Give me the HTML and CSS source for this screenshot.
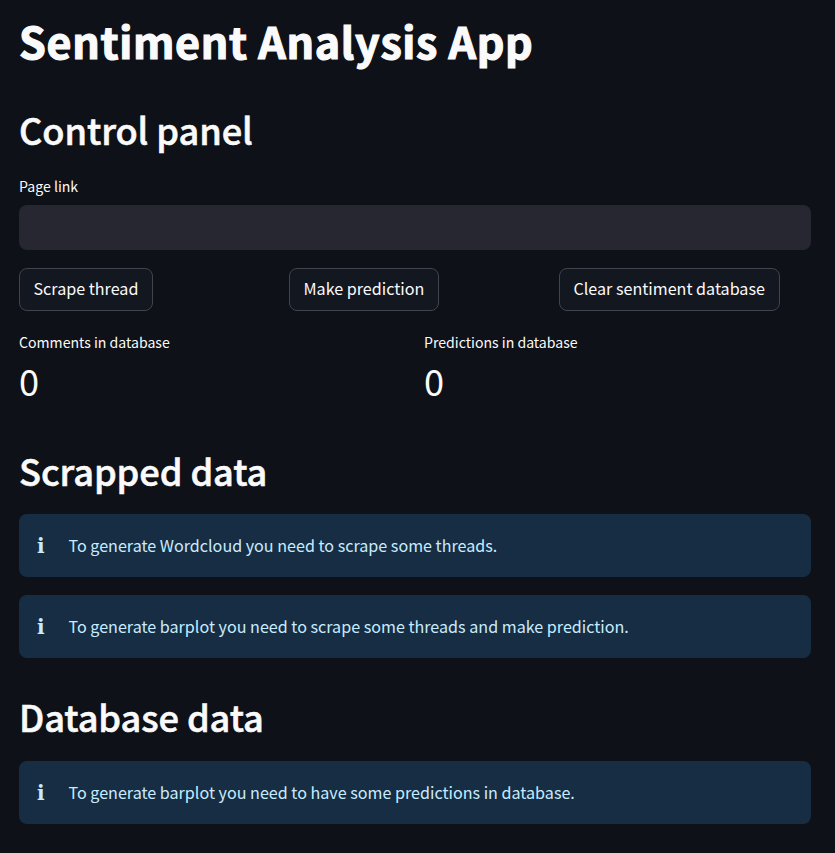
FILE: index.html
```html
<!DOCTYPE html>
<html lang="en">
<head>
<meta charset="utf-8">
<title>Sentiment Analysis App</title>
<link rel="stylesheet" href="styles.css">
</head>
<body>
<main class="app">
  <h1 class="title">Sentiment Analysis App</h1>
  <section class="panel">
    <h2 class="heading">Control panel</h2>
    <label class="label" for="link">Page link</label>
    <input class="input" id="link" type="text">
    <div class="actions">
      <div><button class="button">Scrape thread</button></div>
      <div><button class="button">Make prediction</button></div>
      <div><button class="button">Clear sentiment database</button></div>
    </div>
    <div class="metrics">
      <div><div class="label">Comments in database</div><div class="value">0</div></div>
      <div><div class="label">Predictions in database</div><div class="value">0</div></div>
    </div>
  </section>
  <section class="results">
    <h2 class="heading">Scrapped data</h2>
    <div class="alert"><span class="icon">i</span><p>To generate Wordcloud you need to scrape some threads.</p></div>
    <div class="alert"><span class="icon">i</span><p>To generate barplot you need to scrape some threads and make prediction.</p></div>
  </section>
  <section class="results">
    <h2 class="heading">Database data</h2>
    <div class="alert"><span class="icon">i</span><p>To generate barplot you need to have some predictions in database.</p></div>
  </section>
</main>
</body>
</html>
```
FILE: styles.css
```css
* { box-sizing: border-box; }
body {
  margin: 0;
  background: #0e1117;
  color: #fafafa;
  font: 16.13px/1.6 "Noto Sans CJK SC", sans-serif;
}
.app { padding: 10px 24px 0 19px; }
h1, h2, p { margin: 0; }
.title { font-size: 43px; line-height: 60px; font-weight: 700; letter-spacing: 0.68px; -webkit-text-stroke: 1.2px; }
.heading { font-size: 36.2px; line-height: 48px; font-weight: 500; letter-spacing: -0.1px; -webkit-text-stroke: 0.55px; }
.panel { padding-top: 35px; }
.label { display: block; font-size: 14.1px; line-height: 24px; }
.heading + .label { margin-top: 21px; margin-bottom: 7px; }
.input {
  display: block;
  width: 100%;
  height: 45px;
  padding: 0 14px;
  border: 0;
  border-radius: 8px;
  background: #262730;
  color: inherit;
  font: inherit;
}
.actions { display: grid; grid-template-columns: repeat(3, 252px); gap: 18px; margin-top: 18px; }
.button {
  display: block;
  height: 43px;
  padding: 0 13.9px 2px 13.5px;
  border: 1px solid #41444c;
  border-radius: 8px;
  background: #131720;
  color: inherit;
  font: inherit;
  white-space: nowrap;
}
.metrics { display: grid; grid-template-columns: 1fr 1fr; gap: 18px; margin-top: 19px; }
.value { font-size: 36.2px; line-height: 56px; margin-top: -2px; }
.results { padding-top: 34px; }
.panel + .results { padding-top: 38px; }
.heading + .alert { margin-top: 20px; }
.results:last-child .alert { margin-top: 21px; }
.alert {
  display: flex;
  align-items: center;
  height: 63px;
  margin-top: 18px;
  padding-left: 18px;
  border-radius: 8px;
  background: #172d43;
  color: #c7ebff;
}
.icon { width: 31.5px; font: bold 20px "DejaVu Serif", serif; }
```
